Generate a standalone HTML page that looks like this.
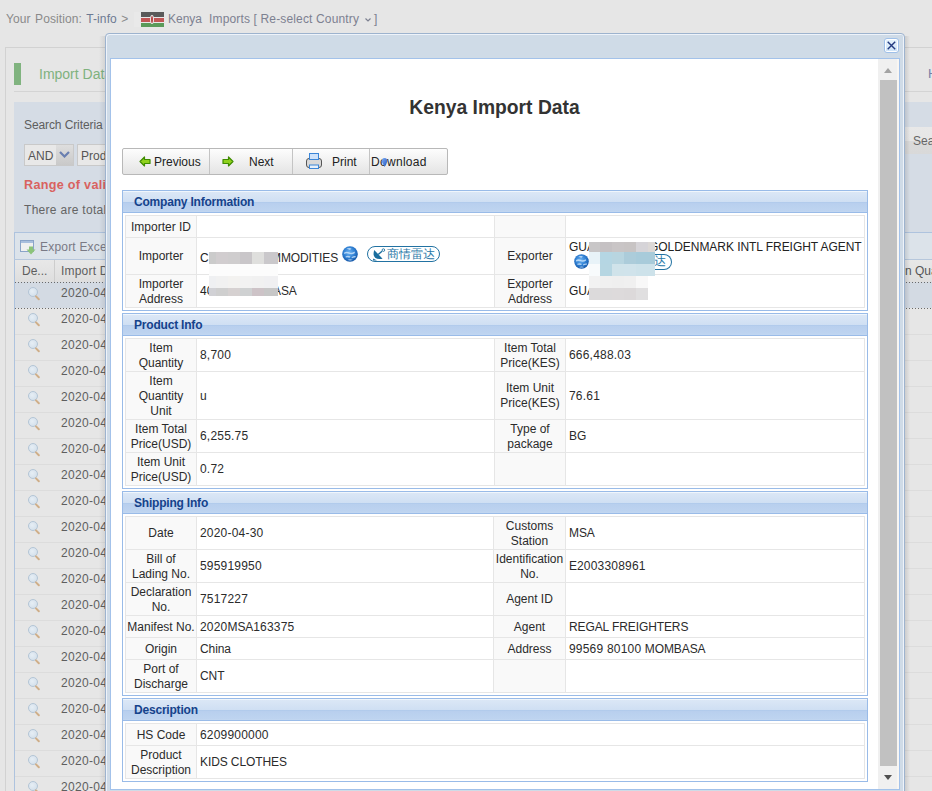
<!DOCTYPE html>
<html><head><meta charset="utf-8"><style>
html,body{margin:0;padding:0}
body{width:932px;height:791px;overflow:hidden;position:relative;background:#e6e6e6;font-family:"Liberation Sans", sans-serif}
</style></head><body>
<div style="position:absolute;left:6px;top:12px;white-space:nowrap;font-size:12px;color:#8a8a8a;letter-spacing:0.1px;word-spacing:1px">Your Position: <span style="color:#6d7a93">T-info</span> &gt;</div>
<div style="position:absolute;left:134px;top:12px;width:7px;height:15px;background:#e9e9e9"></div>
<div style="position:absolute;left:141px;top:12px;width:23px;height:15px;background:linear-gradient(#5a5a5a 0,#5a5a5a 5px,#e8e8e8 5px,#e8e8e8 6px,#c25656 6px,#c25656 10px,#e8e8e8 10px,#e8e8e8 11px,#5a9a5a 11px)"></div>
<div style="position:absolute;left:150px;top:15px;width:4px;height:9px;border-radius:50%;background:#b84848;border:1px solid #e8e8e8;box-sizing:border-box"></div>
<div style="position:absolute;left:168px;top:12px;white-space:nowrap;font-size:12px;color:#7d8191">Kenya</div>
<div style="position:absolute;left:209px;top:12px;white-space:nowrap;font-size:12px;color:#7d8191;letter-spacing:0.15px">Imports [ Re-select Country</div>
<svg style="position:absolute;left:365px;top:18px" width="6" height="4" viewBox="0 0 6 4"><path d="M0.5 0.5 L3 3 L5.5 0.5" fill="none" stroke="#7d8191" stroke-width="1.2"/></svg>
<div style="position:absolute;left:374px;top:12px;white-space:nowrap;font-size:12px;color:#7d8191">]</div>
<div style="position:absolute;left:5px;top:47px;width:1000px;height:1000px;border:1px solid #d2d2d2;box-sizing:border-box"></div>
<div style="position:absolute;left:14px;top:63px;width:7px;height:22px;background:#80b37f"></div>
<div style="position:absolute;left:39px;top:66px;white-space:nowrap;font-size:14px;color:#7fb27e">Import Data</div>
<div style="position:absolute;left:14px;top:91px;width:1000px;height:1px;background:#d4d4d4"></div>
<div style="position:absolute;left:928px;top:66px;white-space:nowrap;font-size:13px;color:#7480a8">H</div>
<div style="position:absolute;left:14px;top:102px;width:1000px;height:130px;background:#d5dce5"></div>
<div style="position:absolute;left:24px;top:118px;white-space:nowrap;font-size:12px;color:#5e5e5e;letter-spacing:-0.1px">Search Criteria</div>
<div style="position:absolute;left:24px;top:144px;width:50px;height:22px;background:#e8e8e8;border:1px solid #c9c9c9;box-sizing:border-box"></div>
<div style="position:absolute;left:28px;top:149px;white-space:nowrap;font-size:12px;color:#555">AND</div>
<div style="position:absolute;left:56px;top:145px;width:17px;height:20px;background:linear-gradient(#dedede,#c9c9c9)"></div>
<svg style="position:absolute;left:59px;top:151px" width="11" height="7" viewBox="0 0 11 7"><path d="M1 1 L5.5 5.5 L10 1" fill="none" stroke="#6a7fb0" stroke-width="2.2"/></svg>
<div style="position:absolute;left:77px;top:144px;width:100px;height:22px;background:#e8e8e8;border:1px solid #c9c9c9;box-sizing:border-box"></div>
<div style="position:absolute;left:81px;top:149px;white-space:nowrap;font-size:12px;color:#555">Product</div>
<div style="position:absolute;left:24px;top:178px;white-space:nowrap;font-size:12.6px;font-weight:bold;color:#d9625f;letter-spacing:0.3px">Range of valid</div>
<div style="position:absolute;left:24px;top:203px;white-space:nowrap;font-size:12px;color:#646464;letter-spacing:0.3px">There are total</div>
<div style="position:absolute;left:905px;top:127px;width:40px;height:27px;background:linear-gradient(#e8e8e8 0,#e6e6e6 50%,#dadada 50%,#d9d9d9 100%)"></div>
<div style="position:absolute;left:913px;top:134px;white-space:nowrap;font-size:12px;color:#666">Search</div>
<div style="position:absolute;left:14px;top:232px;width:1000px;height:1px;background:#aec3de"></div>
<div style="position:absolute;left:14px;top:232px;width:1px;height:600px;background:#aec3de"></div>
<div style="position:absolute;left:15px;top:233px;width:1000px;height:26px;background:#dce3ea"></div>
<div style="position:absolute;left:14px;top:259px;width:1000px;height:1px;background:#b6c7dc"></div>
<div style="position:absolute;left:20px;top:240px;width:14px;height:12px;border:1px solid #8aa4c8;box-sizing:border-box;background:linear-gradient(#a9bfdd 0,#a9bfdd 2px,#f0f0f0 2px)"></div>
<svg style="position:absolute;left:26px;top:246px" width="10" height="9" viewBox="0 0 10 9"><path d="M3 0.5 L7 0.5 L7 3.5 L9.5 3.5 L5 8.5 L0.5 3.5 L3 3.5 Z" fill="#8cc47a"/></svg>
<div style="position:absolute;left:40px;top:240px;white-space:nowrap;font-size:12px;color:#7a7a85;letter-spacing:0.2px">Export Excel</div>
<div style="position:absolute;left:15px;top:260px;width:1000px;height:22px;background:linear-gradient(#e8e8e8,#dedede)"></div>
<div style="position:absolute;left:54px;top:260px;width:1px;height:22px;background:#cdcdcd"></div>
<div style="position:absolute;left:22px;top:264px;white-space:nowrap;font-size:12px;color:#5e5e5e">De...</div>
<div style="position:absolute;left:61px;top:264px;white-space:nowrap;font-size:12px;color:#5e5e5e;letter-spacing:0.2px">Import Date</div>
<div style="position:absolute;left:905px;top:264px;white-space:nowrap;font-size:12px;color:#555">n Quantity</div>
<div style="position:absolute;left:15px;top:282px;width:1000px;height:26px;background:#d3dae3"></div>
<div style="position:absolute;left:15px;top:282px;width:1000px;height:1px;background-image:linear-gradient(90deg,#6a6a6a 50%,transparent 50%);background-size:3px 1px"></div>
<div style="position:absolute;left:15px;top:308px;width:1000px;height:1px;background-image:linear-gradient(90deg,#6a6a6a 50%,transparent 50%);background-size:3px 1px"></div>
<div style="position:absolute;left:28px;top:287px;width:10px;height:10px;border-radius:50%;border:1px solid #b3c5d6;background:radial-gradient(circle at 40% 40%,#e6eef5,#cfdce8);box-sizing:border-box"></div>
<div style="position:absolute;left:36px;top:295px;width:6px;height:2px;background:#cfae88;transform:rotate(45deg);transform-origin:0 0;border-radius:1px"></div>
<div style="position:absolute;left:61px;top:286px;white-space:nowrap;font-size:12px;color:#5e5e5e;letter-spacing:0.3px">2020-04-30</div>
<div style="position:absolute;left:15px;top:334px;width:1000px;height:1px;background:#dcdcdc"></div>
<div style="position:absolute;left:28px;top:313px;width:10px;height:10px;border-radius:50%;border:1px solid #b3c5d6;background:radial-gradient(circle at 40% 40%,#e6eef5,#cfdce8);box-sizing:border-box"></div>
<div style="position:absolute;left:36px;top:321px;width:6px;height:2px;background:#cfae88;transform:rotate(45deg);transform-origin:0 0;border-radius:1px"></div>
<div style="position:absolute;left:61px;top:312px;white-space:nowrap;font-size:12px;color:#5e5e5e;letter-spacing:0.3px">2020-04-30</div>
<div style="position:absolute;left:15px;top:360px;width:1000px;height:1px;background:#dcdcdc"></div>
<div style="position:absolute;left:28px;top:339px;width:10px;height:10px;border-radius:50%;border:1px solid #b3c5d6;background:radial-gradient(circle at 40% 40%,#e6eef5,#cfdce8);box-sizing:border-box"></div>
<div style="position:absolute;left:36px;top:347px;width:6px;height:2px;background:#cfae88;transform:rotate(45deg);transform-origin:0 0;border-radius:1px"></div>
<div style="position:absolute;left:61px;top:338px;white-space:nowrap;font-size:12px;color:#5e5e5e;letter-spacing:0.3px">2020-04-30</div>
<div style="position:absolute;left:15px;top:386px;width:1000px;height:1px;background:#dcdcdc"></div>
<div style="position:absolute;left:28px;top:365px;width:10px;height:10px;border-radius:50%;border:1px solid #b3c5d6;background:radial-gradient(circle at 40% 40%,#e6eef5,#cfdce8);box-sizing:border-box"></div>
<div style="position:absolute;left:36px;top:373px;width:6px;height:2px;background:#cfae88;transform:rotate(45deg);transform-origin:0 0;border-radius:1px"></div>
<div style="position:absolute;left:61px;top:364px;white-space:nowrap;font-size:12px;color:#5e5e5e;letter-spacing:0.3px">2020-04-30</div>
<div style="position:absolute;left:15px;top:412px;width:1000px;height:1px;background:#dcdcdc"></div>
<div style="position:absolute;left:28px;top:391px;width:10px;height:10px;border-radius:50%;border:1px solid #b3c5d6;background:radial-gradient(circle at 40% 40%,#e6eef5,#cfdce8);box-sizing:border-box"></div>
<div style="position:absolute;left:36px;top:399px;width:6px;height:2px;background:#cfae88;transform:rotate(45deg);transform-origin:0 0;border-radius:1px"></div>
<div style="position:absolute;left:61px;top:390px;white-space:nowrap;font-size:12px;color:#5e5e5e;letter-spacing:0.3px">2020-04-30</div>
<div style="position:absolute;left:15px;top:438px;width:1000px;height:1px;background:#dcdcdc"></div>
<div style="position:absolute;left:28px;top:417px;width:10px;height:10px;border-radius:50%;border:1px solid #b3c5d6;background:radial-gradient(circle at 40% 40%,#e6eef5,#cfdce8);box-sizing:border-box"></div>
<div style="position:absolute;left:36px;top:425px;width:6px;height:2px;background:#cfae88;transform:rotate(45deg);transform-origin:0 0;border-radius:1px"></div>
<div style="position:absolute;left:61px;top:416px;white-space:nowrap;font-size:12px;color:#5e5e5e;letter-spacing:0.3px">2020-04-30</div>
<div style="position:absolute;left:15px;top:464px;width:1000px;height:1px;background:#dcdcdc"></div>
<div style="position:absolute;left:28px;top:443px;width:10px;height:10px;border-radius:50%;border:1px solid #b3c5d6;background:radial-gradient(circle at 40% 40%,#e6eef5,#cfdce8);box-sizing:border-box"></div>
<div style="position:absolute;left:36px;top:451px;width:6px;height:2px;background:#cfae88;transform:rotate(45deg);transform-origin:0 0;border-radius:1px"></div>
<div style="position:absolute;left:61px;top:442px;white-space:nowrap;font-size:12px;color:#5e5e5e;letter-spacing:0.3px">2020-04-30</div>
<div style="position:absolute;left:15px;top:490px;width:1000px;height:1px;background:#dcdcdc"></div>
<div style="position:absolute;left:28px;top:469px;width:10px;height:10px;border-radius:50%;border:1px solid #b3c5d6;background:radial-gradient(circle at 40% 40%,#e6eef5,#cfdce8);box-sizing:border-box"></div>
<div style="position:absolute;left:36px;top:477px;width:6px;height:2px;background:#cfae88;transform:rotate(45deg);transform-origin:0 0;border-radius:1px"></div>
<div style="position:absolute;left:61px;top:468px;white-space:nowrap;font-size:12px;color:#5e5e5e;letter-spacing:0.3px">2020-04-30</div>
<div style="position:absolute;left:15px;top:516px;width:1000px;height:1px;background:#dcdcdc"></div>
<div style="position:absolute;left:28px;top:495px;width:10px;height:10px;border-radius:50%;border:1px solid #b3c5d6;background:radial-gradient(circle at 40% 40%,#e6eef5,#cfdce8);box-sizing:border-box"></div>
<div style="position:absolute;left:36px;top:503px;width:6px;height:2px;background:#cfae88;transform:rotate(45deg);transform-origin:0 0;border-radius:1px"></div>
<div style="position:absolute;left:61px;top:494px;white-space:nowrap;font-size:12px;color:#5e5e5e;letter-spacing:0.3px">2020-04-30</div>
<div style="position:absolute;left:15px;top:542px;width:1000px;height:1px;background:#dcdcdc"></div>
<div style="position:absolute;left:28px;top:521px;width:10px;height:10px;border-radius:50%;border:1px solid #b3c5d6;background:radial-gradient(circle at 40% 40%,#e6eef5,#cfdce8);box-sizing:border-box"></div>
<div style="position:absolute;left:36px;top:529px;width:6px;height:2px;background:#cfae88;transform:rotate(45deg);transform-origin:0 0;border-radius:1px"></div>
<div style="position:absolute;left:61px;top:520px;white-space:nowrap;font-size:12px;color:#5e5e5e;letter-spacing:0.3px">2020-04-30</div>
<div style="position:absolute;left:15px;top:568px;width:1000px;height:1px;background:#dcdcdc"></div>
<div style="position:absolute;left:28px;top:547px;width:10px;height:10px;border-radius:50%;border:1px solid #b3c5d6;background:radial-gradient(circle at 40% 40%,#e6eef5,#cfdce8);box-sizing:border-box"></div>
<div style="position:absolute;left:36px;top:555px;width:6px;height:2px;background:#cfae88;transform:rotate(45deg);transform-origin:0 0;border-radius:1px"></div>
<div style="position:absolute;left:61px;top:546px;white-space:nowrap;font-size:12px;color:#5e5e5e;letter-spacing:0.3px">2020-04-30</div>
<div style="position:absolute;left:15px;top:594px;width:1000px;height:1px;background:#dcdcdc"></div>
<div style="position:absolute;left:28px;top:573px;width:10px;height:10px;border-radius:50%;border:1px solid #b3c5d6;background:radial-gradient(circle at 40% 40%,#e6eef5,#cfdce8);box-sizing:border-box"></div>
<div style="position:absolute;left:36px;top:581px;width:6px;height:2px;background:#cfae88;transform:rotate(45deg);transform-origin:0 0;border-radius:1px"></div>
<div style="position:absolute;left:61px;top:572px;white-space:nowrap;font-size:12px;color:#5e5e5e;letter-spacing:0.3px">2020-04-30</div>
<div style="position:absolute;left:15px;top:620px;width:1000px;height:1px;background:#dcdcdc"></div>
<div style="position:absolute;left:28px;top:599px;width:10px;height:10px;border-radius:50%;border:1px solid #b3c5d6;background:radial-gradient(circle at 40% 40%,#e6eef5,#cfdce8);box-sizing:border-box"></div>
<div style="position:absolute;left:36px;top:607px;width:6px;height:2px;background:#cfae88;transform:rotate(45deg);transform-origin:0 0;border-radius:1px"></div>
<div style="position:absolute;left:61px;top:598px;white-space:nowrap;font-size:12px;color:#5e5e5e;letter-spacing:0.3px">2020-04-30</div>
<div style="position:absolute;left:15px;top:646px;width:1000px;height:1px;background:#dcdcdc"></div>
<div style="position:absolute;left:28px;top:625px;width:10px;height:10px;border-radius:50%;border:1px solid #b3c5d6;background:radial-gradient(circle at 40% 40%,#e6eef5,#cfdce8);box-sizing:border-box"></div>
<div style="position:absolute;left:36px;top:633px;width:6px;height:2px;background:#cfae88;transform:rotate(45deg);transform-origin:0 0;border-radius:1px"></div>
<div style="position:absolute;left:61px;top:624px;white-space:nowrap;font-size:12px;color:#5e5e5e;letter-spacing:0.3px">2020-04-30</div>
<div style="position:absolute;left:15px;top:672px;width:1000px;height:1px;background:#dcdcdc"></div>
<div style="position:absolute;left:28px;top:651px;width:10px;height:10px;border-radius:50%;border:1px solid #b3c5d6;background:radial-gradient(circle at 40% 40%,#e6eef5,#cfdce8);box-sizing:border-box"></div>
<div style="position:absolute;left:36px;top:659px;width:6px;height:2px;background:#cfae88;transform:rotate(45deg);transform-origin:0 0;border-radius:1px"></div>
<div style="position:absolute;left:61px;top:650px;white-space:nowrap;font-size:12px;color:#5e5e5e;letter-spacing:0.3px">2020-04-30</div>
<div style="position:absolute;left:15px;top:698px;width:1000px;height:1px;background:#dcdcdc"></div>
<div style="position:absolute;left:28px;top:677px;width:10px;height:10px;border-radius:50%;border:1px solid #b3c5d6;background:radial-gradient(circle at 40% 40%,#e6eef5,#cfdce8);box-sizing:border-box"></div>
<div style="position:absolute;left:36px;top:685px;width:6px;height:2px;background:#cfae88;transform:rotate(45deg);transform-origin:0 0;border-radius:1px"></div>
<div style="position:absolute;left:61px;top:676px;white-space:nowrap;font-size:12px;color:#5e5e5e;letter-spacing:0.3px">2020-04-30</div>
<div style="position:absolute;left:15px;top:724px;width:1000px;height:1px;background:#dcdcdc"></div>
<div style="position:absolute;left:28px;top:703px;width:10px;height:10px;border-radius:50%;border:1px solid #b3c5d6;background:radial-gradient(circle at 40% 40%,#e6eef5,#cfdce8);box-sizing:border-box"></div>
<div style="position:absolute;left:36px;top:711px;width:6px;height:2px;background:#cfae88;transform:rotate(45deg);transform-origin:0 0;border-radius:1px"></div>
<div style="position:absolute;left:61px;top:702px;white-space:nowrap;font-size:12px;color:#5e5e5e;letter-spacing:0.3px">2020-04-30</div>
<div style="position:absolute;left:15px;top:750px;width:1000px;height:1px;background:#dcdcdc"></div>
<div style="position:absolute;left:28px;top:729px;width:10px;height:10px;border-radius:50%;border:1px solid #b3c5d6;background:radial-gradient(circle at 40% 40%,#e6eef5,#cfdce8);box-sizing:border-box"></div>
<div style="position:absolute;left:36px;top:737px;width:6px;height:2px;background:#cfae88;transform:rotate(45deg);transform-origin:0 0;border-radius:1px"></div>
<div style="position:absolute;left:61px;top:728px;white-space:nowrap;font-size:12px;color:#5e5e5e;letter-spacing:0.3px">2020-04-30</div>
<div style="position:absolute;left:15px;top:776px;width:1000px;height:1px;background:#dcdcdc"></div>
<div style="position:absolute;left:28px;top:755px;width:10px;height:10px;border-radius:50%;border:1px solid #b3c5d6;background:radial-gradient(circle at 40% 40%,#e6eef5,#cfdce8);box-sizing:border-box"></div>
<div style="position:absolute;left:36px;top:763px;width:6px;height:2px;background:#cfae88;transform:rotate(45deg);transform-origin:0 0;border-radius:1px"></div>
<div style="position:absolute;left:61px;top:754px;white-space:nowrap;font-size:12px;color:#5e5e5e;letter-spacing:0.3px">2020-04-30</div>
<div style="position:absolute;left:15px;top:802px;width:1000px;height:1px;background:#dcdcdc"></div>
<div style="position:absolute;left:28px;top:781px;width:10px;height:10px;border-radius:50%;border:1px solid #b3c5d6;background:radial-gradient(circle at 40% 40%,#e6eef5,#cfdce8);box-sizing:border-box"></div>
<div style="position:absolute;left:36px;top:789px;width:6px;height:2px;background:#cfae88;transform:rotate(45deg);transform-origin:0 0;border-radius:1px"></div>
<div style="position:absolute;left:61px;top:780px;white-space:nowrap;font-size:12px;color:#5e5e5e;letter-spacing:0.3px">2020-04-30</div>
<div style="position:absolute;left:99px;top:36px;width:6px;height:800px;background:linear-gradient(90deg,rgba(0,0,0,0),rgba(0,0,0,0.08))"></div>
<div style="position:absolute;left:905px;top:36px;width:5px;height:800px;background:linear-gradient(90deg,rgba(0,0,0,0.11),rgba(0,0,0,0))"></div>
<div style="position:absolute;left:105px;top:33px;width:800px;height:800px;background:#cfdbe7;border:1px solid #9db3ce;border-radius:4px 4px 0 0;box-sizing:border-box;box-shadow:inset 1px 1px 0 #eef3fa, inset -1px 0 0 #eef3fa"></div>
<div style="position:absolute;left:884px;top:38px;width:15px;height:15px;box-sizing:border-box;border:1px solid #9fc0e9;border-radius:3px;background:linear-gradient(#ffffff,#ffffff)"></div>
<div style="position:absolute;left:886px;top:40px;width:11px;height:11px;background:linear-gradient(#e6f3fd,#cfe4f8)"></div>
<svg style="position:absolute;left:884px;top:38px" width="15" height="15" viewBox="0 0 15 15"><path d="M3.7 3.7 L11.2 11.2 M11.2 3.7 L3.7 11.2" stroke="#233a80" stroke-width="1.4"/></svg>
<div style="position:absolute;left:110px;top:58px;width:790px;height:732px;background:#fff;border:1px solid #a3c2ea;box-sizing:border-box"></div>
<div style="position:absolute;left:878px;top:59px;width:21px;height:730px;background:#f0f0f0"></div>
<div style="position:absolute;left:897px;top:59px;width:2px;height:730px;background:#f9f6f2"></div>
<div style="position:absolute;left:880px;top:80px;width:17px;height:686px;background:#c1c1c1"></div>
<div style="position:absolute;left:884px;top:68px;width:0;height:0;border-left:4.5px solid transparent;border-right:4.5px solid transparent;border-bottom:5px solid #a3a3a3"></div>
<div style="position:absolute;left:884px;top:775px;width:0;height:0;border-left:4.5px solid transparent;border-right:4.5px solid transparent;border-top:5px solid #505050"></div>
<div style="position:absolute;left:111px;top:97px;width:767px;text-align:center;font-weight:bold;font-size:19.3px;color:#333;white-space:nowrap">Kenya Import Data</div>
<div style="position:absolute;left:122px;top:148px;width:326px;height:27px;box-sizing:border-box;border:1px solid #b8b8b8;border-radius:2px;background:linear-gradient(#fdfdfd,#e4e4e4)"></div>
<div style="position:absolute;left:209px;top:149px;width:1px;height:25px;background:#c4c4c4"></div>
<div style="position:absolute;left:292px;top:149px;width:1px;height:25px;background:#c4c4c4"></div>
<div style="position:absolute;left:369px;top:149px;width:1px;height:25px;background:#c4c4c4"></div>
<svg style="position:absolute;left:139px;top:156px" width="12" height="11" viewBox="0 0 12 11"><path d="M1 5.5 L5.5 1 L5.5 3.5 L11 3.5 L11 7.5 L5.5 7.5 L5.5 10 Z" fill="#8fd11c" stroke="#3f8c00" stroke-width="1.2" stroke-linejoin="round"/></svg>
<svg style="position:absolute;left:222px;top:156px" width="12" height="11" viewBox="0 0 12 11"><path d="M11 5.5 L6.5 1 L6.5 3.5 L1 3.5 L1 7.5 L6.5 7.5 L6.5 10 Z" fill="#8fd11c" stroke="#3f8c00" stroke-width="1.2" stroke-linejoin="round"/></svg>
<svg style="position:absolute;left:305px;top:152px" width="18" height="18" viewBox="0 0 18 18"><rect x="1.5" y="6.5" width="15" height="9" rx="2.5" fill="#d9d9d9" stroke="#555" stroke-width="1"/><rect x="4.5" y="1.5" width="9" height="6" fill="#cfe3fb" stroke="#3b86d8" stroke-width="1"/><rect x="4.5" y="13" width="9" height="3.5" fill="#e6f0fb" stroke="#3b86d8" stroke-width="1"/></svg>
<div style="position:absolute;top:155px;font-size:12px;color:#222;white-space:nowrap;left:154px">Previous</div>
<div style="position:absolute;top:155px;font-size:12px;color:#222;white-space:nowrap;left:249px">Next</div>
<div style="position:absolute;top:155px;font-size:12px;color:#222;white-space:nowrap;left:332px">Print</div>
<div style="position:absolute;top:155px;font-size:12px;color:#222;white-space:nowrap;left:371px;letter-spacing:0.3px">Download</div>
<svg style="position:absolute;left:381px;top:157px" width="7" height="11" viewBox="0 0 7 11"><defs><linearGradient id="dlg" x1="0" y1="0" x2="1" y2="1"><stop offset="0" stop-color="#7fb0f5"/><stop offset="1" stop-color="#1f4fc0"/></linearGradient></defs><path d="M3.5 1 C5.8 1 6.3 2.8 6.3 4.6 L3.5 10 L0.7 4.6 C0.7 2.8 1.2 1 3.5 1 Z" fill="url(#dlg)"/></svg>
<div style="position:absolute;left:122px;top:190px;width:746px;height:121px;border:1px solid #99bbe8;box-sizing:border-box;background:#fff"></div>
<div style="position:absolute;left:123px;top:191px;width:744px;height:21px;background:linear-gradient(#f0f6fc 0,#f0f6fc 1px,#dbe7f6 1px,#cfdff3 11px,#abc7ea 11px,#b8cfee 12px,#bed4f0 20px,#c4d8f1 21px)"></div>
<div style="position:absolute;left:123px;top:212px;width:744px;height:1px;background:#99bbe8"></div>
<div style="position:absolute;left:134px;top:195px;white-space:nowrap;font-weight:bold;font-size:12px;color:#15428b;line-height:14px;letter-spacing:-0.2px">Company Information</div>
<div style="position:absolute;left:125px;top:215px;width:740px;height:93px;background:#fff"></div>
<div style="position:absolute;left:126px;top:216px;width:70px;height:91px;background:#f9f9f9"></div>
<div style="position:absolute;left:495px;top:216px;width:70px;height:91px;background:#f9f9f9"></div>
<div style="position:absolute;left:125px;top:215px;width:740px;height:1px;background:#e6e6e6"></div>
<div style="position:absolute;left:126px;top:216px;width:70px;height:21px;display:flex;align-items:center;justify-content:center;text-align:center;padding-top:1px;box-sizing:border-box;font-size:12px;line-height:15px;color:#2b2b2b">Importer ID</div>
<div style="position:absolute;left:197px;top:216px;width:297px;height:21px;display:flex;align-items:center;padding-left:3px;padding-top:1px;box-sizing:border-box;font-size:12px;line-height:15px;color:#2b2b2b;white-space:nowrap;letter-spacing:0.2px"><span></span></div>
<div style="position:absolute;left:495px;top:216px;width:70px;height:21px;display:flex;align-items:center;justify-content:center;text-align:center;padding-top:1px;box-sizing:border-box;font-size:12px;line-height:15px;color:#2b2b2b"></div>
<div style="position:absolute;left:566px;top:216px;width:298px;height:21px;display:flex;align-items:center;padding-left:3px;padding-top:1px;box-sizing:border-box;font-size:12px;line-height:15px;color:#2b2b2b;white-space:nowrap;letter-spacing:0.2px"><span></span></div>
<div style="position:absolute;left:125px;top:237px;width:740px;height:1px;background:#e6e6e6"></div>
<div style="position:absolute;left:126px;top:238px;width:70px;height:36px;display:flex;align-items:center;justify-content:center;text-align:center;padding-top:1px;box-sizing:border-box;font-size:12px;line-height:15px;color:#2b2b2b">Importer</div>
<div style="position:absolute;left:495px;top:238px;width:70px;height:36px;display:flex;align-items:center;justify-content:center;text-align:center;padding-top:1px;box-sizing:border-box;font-size:12px;line-height:15px;color:#2b2b2b">Exporter</div>
<div style="position:absolute;left:125px;top:274px;width:740px;height:1px;background:#e6e6e6"></div>
<div style="position:absolute;left:126px;top:275px;width:70px;height:32px;display:flex;align-items:center;justify-content:center;text-align:center;padding-top:1px;box-sizing:border-box;font-size:12px;line-height:15px;color:#2b2b2b">Importer<br>Address</div>
<div style="position:absolute;left:495px;top:275px;width:70px;height:32px;display:flex;align-items:center;justify-content:center;text-align:center;padding-top:1px;box-sizing:border-box;font-size:12px;line-height:15px;color:#2b2b2b">Exporter<br>Address</div>
<div style="position:absolute;left:125px;top:307px;width:740px;height:1px;background:#e6e6e6"></div>
<div style="position:absolute;left:125px;top:215px;width:1px;height:93px;background:#e6e6e6"></div>
<div style="position:absolute;left:196px;top:215px;width:1px;height:93px;background:#e6e6e6"></div>
<div style="position:absolute;left:494px;top:215px;width:1px;height:93px;background:#e6e6e6"></div>
<div style="position:absolute;left:565px;top:215px;width:1px;height:93px;background:#e6e6e6"></div>
<div style="position:absolute;left:864px;top:215px;width:1px;height:93px;background:#e6e6e6"></div>
<div style="position:absolute;left:200px;top:251px;white-space:nowrap;font-size:12px;line-height:15px;color:#222">C</div>
<div style="position:absolute;left:271px;top:251px;white-space:nowrap;font-size:12px;line-height:15px;color:#2b2b2b;letter-spacing:-0.1px">MMODITIES</div>
<svg style="position:absolute;left:342px;top:246px" width="16" height="16" viewBox="0 0 16 16"><defs><radialGradient id="gg342" cx="45%" cy="40%" r="60%"><stop offset="0" stop-color="#6fb4f2"/><stop offset="0.6" stop-color="#2f7fd2"/><stop offset="1" stop-color="#1658a8"/></radialGradient></defs><circle cx="8" cy="8" r="7.8" fill="url(#gg342)"/><path d="M4.5 2.6 Q7 1.6 9.5 2.4 L8 4 Q6 3.4 4.5 2.6 Z M2.2 6.5 Q4.5 5 7 6.2 Q9.5 7.6 12.5 5.6 L13 7 Q10 9 7 7.8 Q4.5 6.8 2 8 Z M3.5 10.5 Q6 9.2 8.5 10.6 L7.5 11.8 Q5.5 11 3.8 11.6 Z M9.5 11.2 Q12 9.6 14 10.2 L13.2 11.6 Q11.5 11.4 10 12.2 Z M5.5 13.8 Q8 12.8 10.8 13.8 Q8 15 5.5 13.8 Z" fill="#d9ecfd" opacity="0.75"/></svg>
<div style="position:absolute;left:367px;top:246px;width:73px;height:16px;box-sizing:border-box;border:1.8px solid #2272a2;border-radius:8px"></div>
<svg style="position:absolute;left:372px;top:248px" width="14" height="13" viewBox="0 0 14 13"><path d="M2.2 2 Q-0.8 12.5 10.6 10.8 Z" fill="#1a6e9e"/><path d="M1.2 10.5 L5 12.4 L1 12.4 Z" fill="#1a6e9e"/><path d="M6.2 6.6 L10 3.2" stroke="#1a6e9e" stroke-width="1.3"/><circle cx="11.4" cy="2.1" r="1.3" fill="none" stroke="#1a6e9e" stroke-width="0.9"/></svg>
<div style="position:absolute;left:387px;top:247px;white-space:nowrap;font-size:11.5px;line-height:14px;color:#2a78a8">商情雷达</div>
<div style="position:absolute;left:200px;top:284px;white-space:nowrap;font-size:12px;line-height:15px;color:#222">40</div>
<div style="position:absolute;left:273px;top:284px;white-space:nowrap;font-size:12px;line-height:15px;color:#2b2b2b;letter-spacing:-0.1px">ASA</div>
<div style="position:absolute;left:569px;top:240px;white-space:nowrap;font-size:12px;line-height:15px;color:#222">GUAN</div>
<div style="position:absolute;left:649px;top:240px;white-space:nowrap;font-size:12px;line-height:15px;color:#222;letter-spacing:-0.05px">GOLDENMARK INTL FREIGHT AGENT</div>
<svg style="position:absolute;left:574px;top:254px" width="15" height="15" viewBox="0 0 16 16"><defs><radialGradient id="gg574" cx="45%" cy="40%" r="60%"><stop offset="0" stop-color="#6fb4f2"/><stop offset="0.6" stop-color="#2f7fd2"/><stop offset="1" stop-color="#1658a8"/></radialGradient></defs><circle cx="8" cy="8" r="7.8" fill="url(#gg574)"/><path d="M4.5 2.6 Q7 1.6 9.5 2.4 L8 4 Q6 3.4 4.5 2.6 Z M2.2 6.5 Q4.5 5 7 6.2 Q9.5 7.6 12.5 5.6 L13 7 Q10 9 7 7.8 Q4.5 6.8 2 8 Z M3.5 10.5 Q6 9.2 8.5 10.6 L7.5 11.8 Q5.5 11 3.8 11.6 Z M9.5 11.2 Q12 9.6 14 10.2 L13.2 11.6 Q11.5 11.4 10 12.2 Z M5.5 13.8 Q8 12.8 10.8 13.8 Q8 15 5.5 13.8 Z" fill="#d9ecfd" opacity="0.75"/></svg>
<div style="position:absolute;left:640px;top:254px;width:32px;height:16px;box-sizing:border-box;border:1.8px solid #2272a2;border-left:none;border-radius:0 8px 8px 0"></div>
<div style="position:absolute;left:654px;top:254px;white-space:nowrap;font-size:11.5px;line-height:14px;color:#2a78a8">达</div>
<div style="position:absolute;left:569px;top:284px;white-space:nowrap;font-size:12px;line-height:15px;color:#222">GUAN</div>
<div style="position:absolute;left:209px;top:252px;width:7px;height:12px;background:#cbcbcb"></div>
<div style="position:absolute;left:216px;top:252px;width:12px;height:12px;background:#d1cdcf"></div>
<div style="position:absolute;left:228px;top:252px;width:12px;height:12px;background:#cfcdce"></div>
<div style="position:absolute;left:240px;top:252px;width:12px;height:12px;background:#c9c6c9"></div>
<div style="position:absolute;left:252px;top:252px;width:12px;height:12px;background:#dfdfdd"></div>
<div style="position:absolute;left:264px;top:252px;width:14px;height:12px;background:#cac8cb"></div>
<div style="position:absolute;left:209px;top:264px;width:7px;height:12px;background:#fcfcfc"></div>
<div style="position:absolute;left:216px;top:264px;width:12px;height:12px;background:#fcfcfc"></div>
<div style="position:absolute;left:228px;top:264px;width:12px;height:12px;background:#fcfcfc"></div>
<div style="position:absolute;left:240px;top:264px;width:12px;height:12px;background:#fcfcfc"></div>
<div style="position:absolute;left:252px;top:264px;width:12px;height:12px;background:#fcfcfc"></div>
<div style="position:absolute;left:264px;top:264px;width:14px;height:12px;background:#fcfcfc"></div>
<div style="position:absolute;left:209px;top:276px;width:7px;height:12px;background:#eff0f2"></div>
<div style="position:absolute;left:216px;top:276px;width:12px;height:12px;background:#f1f1f1"></div>
<div style="position:absolute;left:228px;top:276px;width:12px;height:12px;background:#f3f2f0"></div>
<div style="position:absolute;left:240px;top:276px;width:12px;height:12px;background:#f2f2f2"></div>
<div style="position:absolute;left:252px;top:276px;width:12px;height:12px;background:#f1f1f1"></div>
<div style="position:absolute;left:264px;top:276px;width:14px;height:12px;background:#f0f0f2"></div>
<div style="position:absolute;left:209px;top:288px;width:7px;height:8px;background:#d1d1d5"></div>
<div style="position:absolute;left:216px;top:288px;width:12px;height:8px;background:#cfcfcf"></div>
<div style="position:absolute;left:228px;top:288px;width:12px;height:8px;background:#d6d1d1"></div>
<div style="position:absolute;left:240px;top:288px;width:12px;height:8px;background:#cfd1d2"></div>
<div style="position:absolute;left:252px;top:288px;width:12px;height:8px;background:#cdc3c7"></div>
<div style="position:absolute;left:264px;top:288px;width:14px;height:8px;background:#c7c7c7"></div>
<div style="position:absolute;left:589px;top:242px;width:11px;height:10px;background:#c8c6c7"></div>
<div style="position:absolute;left:600px;top:242px;width:12px;height:10px;background:#c5c1c3"></div>
<div style="position:absolute;left:612px;top:242px;width:12px;height:10px;background:#c9c5c6"></div>
<div style="position:absolute;left:624px;top:242px;width:12px;height:10px;background:#c8c4c4"></div>
<div style="position:absolute;left:636px;top:242px;width:12px;height:10px;background:#d6d4d8"></div>
<div style="position:absolute;left:648px;top:242px;width:7px;height:10px;background:#dcd8d6"></div>
<div style="position:absolute;left:589px;top:252px;width:11px;height:12px;background:#e8f3f8"></div>
<div style="position:absolute;left:600px;top:252px;width:12px;height:12px;background:#b5d6e3"></div>
<div style="position:absolute;left:612px;top:252px;width:12px;height:12px;background:#b8d5e0"></div>
<div style="position:absolute;left:624px;top:252px;width:12px;height:12px;background:#acccda"></div>
<div style="position:absolute;left:636px;top:252px;width:12px;height:12px;background:#a8cbda"></div>
<div style="position:absolute;left:648px;top:252px;width:7px;height:12px;background:#a8cbda"></div>
<div style="position:absolute;left:589px;top:264px;width:11px;height:12px;background:#f8fbfc"></div>
<div style="position:absolute;left:600px;top:264px;width:12px;height:12px;background:#b6d6e2"></div>
<div style="position:absolute;left:612px;top:264px;width:12px;height:12px;background:#d0e3ea"></div>
<div style="position:absolute;left:624px;top:264px;width:12px;height:12px;background:#d0e3eb"></div>
<div style="position:absolute;left:636px;top:264px;width:12px;height:12px;background:#cde2ea"></div>
<div style="position:absolute;left:648px;top:264px;width:7px;height:12px;background:#cde2ea"></div>
<div style="position:absolute;left:589px;top:276px;width:11px;height:12px;background:#f2f2f2"></div>
<div style="position:absolute;left:600px;top:276px;width:12px;height:12px;background:#f0f0f0"></div>
<div style="position:absolute;left:612px;top:276px;width:12px;height:12px;background:#efefef"></div>
<div style="position:absolute;left:624px;top:276px;width:12px;height:12px;background:#f0f0f0"></div>
<div style="position:absolute;left:636px;top:276px;width:12px;height:12px;background:#f8f8f8"></div>
<div style="position:absolute;left:589px;top:288px;width:11px;height:12px;background:#dcdadb"></div>
<div style="position:absolute;left:600px;top:288px;width:12px;height:12px;background:#dcdadb"></div>
<div style="position:absolute;left:612px;top:288px;width:12px;height:12px;background:#dddadb"></div>
<div style="position:absolute;left:624px;top:288px;width:12px;height:12px;background:#dcd9da"></div>
<div style="position:absolute;left:636px;top:288px;width:12px;height:12px;background:#e0dfe0"></div>
<div style="position:absolute;left:122px;top:313px;width:746px;height:176px;border:1px solid #99bbe8;box-sizing:border-box;background:#fff"></div>
<div style="position:absolute;left:123px;top:314px;width:744px;height:21px;background:linear-gradient(#f0f6fc 0,#f0f6fc 1px,#dbe7f6 1px,#cfdff3 11px,#abc7ea 11px,#b8cfee 12px,#bed4f0 20px,#c4d8f1 21px)"></div>
<div style="position:absolute;left:123px;top:335px;width:744px;height:1px;background:#99bbe8"></div>
<div style="position:absolute;left:134px;top:318px;white-space:nowrap;font-weight:bold;font-size:12px;color:#15428b;line-height:14px;letter-spacing:-0.2px">Product Info</div>
<div style="position:absolute;left:125px;top:338px;width:740px;height:148px;background:#fff"></div>
<div style="position:absolute;left:126px;top:339px;width:70px;height:146px;background:#f9f9f9"></div>
<div style="position:absolute;left:495px;top:339px;width:70px;height:146px;background:#f9f9f9"></div>
<div style="position:absolute;left:125px;top:338px;width:740px;height:1px;background:#e6e6e6"></div>
<div style="position:absolute;left:126px;top:339px;width:70px;height:32px;display:flex;align-items:center;justify-content:center;text-align:center;padding-top:1px;box-sizing:border-box;font-size:12px;line-height:15px;color:#2b2b2b">Item<br>Quantity</div>
<div style="position:absolute;left:197px;top:339px;width:297px;height:32px;display:flex;align-items:center;padding-left:3px;padding-top:1px;box-sizing:border-box;font-size:12px;line-height:15px;color:#2b2b2b;white-space:nowrap;letter-spacing:0.2px"><span>8,700</span></div>
<div style="position:absolute;left:495px;top:339px;width:70px;height:32px;display:flex;align-items:center;justify-content:center;text-align:center;padding-top:1px;box-sizing:border-box;font-size:12px;line-height:15px;color:#2b2b2b">Item Total<br>Price(KES)</div>
<div style="position:absolute;left:566px;top:339px;width:298px;height:32px;display:flex;align-items:center;padding-left:3px;padding-top:1px;box-sizing:border-box;font-size:12px;line-height:15px;color:#2b2b2b;white-space:nowrap;letter-spacing:0.2px"><span>666,488.03</span></div>
<div style="position:absolute;left:125px;top:371px;width:740px;height:1px;background:#e6e6e6"></div>
<div style="position:absolute;left:126px;top:372px;width:70px;height:47px;display:flex;align-items:center;justify-content:center;text-align:center;padding-top:1px;box-sizing:border-box;font-size:12px;line-height:15px;color:#2b2b2b">Item<br>Quantity<br>Unit</div>
<div style="position:absolute;left:197px;top:372px;width:297px;height:47px;display:flex;align-items:center;padding-left:3px;padding-top:1px;box-sizing:border-box;font-size:12px;line-height:15px;color:#2b2b2b;white-space:nowrap;letter-spacing:0.2px"><span><span style="letter-spacing:-0.1px">u</span></span></div>
<div style="position:absolute;left:495px;top:372px;width:70px;height:47px;display:flex;align-items:center;justify-content:center;text-align:center;padding-top:1px;box-sizing:border-box;font-size:12px;line-height:15px;color:#2b2b2b">Item Unit<br>Price(KES)</div>
<div style="position:absolute;left:566px;top:372px;width:298px;height:47px;display:flex;align-items:center;padding-left:3px;padding-top:1px;box-sizing:border-box;font-size:12px;line-height:15px;color:#2b2b2b;white-space:nowrap;letter-spacing:0.2px"><span>76.61</span></div>
<div style="position:absolute;left:125px;top:419px;width:740px;height:1px;background:#e6e6e6"></div>
<div style="position:absolute;left:126px;top:420px;width:70px;height:32px;display:flex;align-items:center;justify-content:center;text-align:center;padding-top:1px;box-sizing:border-box;font-size:12px;line-height:15px;color:#2b2b2b">Item Total<br>Price(USD)</div>
<div style="position:absolute;left:197px;top:420px;width:297px;height:32px;display:flex;align-items:center;padding-left:3px;padding-top:1px;box-sizing:border-box;font-size:12px;line-height:15px;color:#2b2b2b;white-space:nowrap;letter-spacing:0.2px"><span>6,255.75</span></div>
<div style="position:absolute;left:495px;top:420px;width:70px;height:32px;display:flex;align-items:center;justify-content:center;text-align:center;padding-top:1px;box-sizing:border-box;font-size:12px;line-height:15px;color:#2b2b2b">Type of<br>package</div>
<div style="position:absolute;left:566px;top:420px;width:298px;height:32px;display:flex;align-items:center;padding-left:3px;padding-top:1px;box-sizing:border-box;font-size:12px;line-height:15px;color:#2b2b2b;white-space:nowrap;letter-spacing:0.2px"><span><span style="letter-spacing:-0.1px">BG</span></span></div>
<div style="position:absolute;left:125px;top:452px;width:740px;height:1px;background:#e6e6e6"></div>
<div style="position:absolute;left:126px;top:453px;width:70px;height:32px;display:flex;align-items:center;justify-content:center;text-align:center;padding-top:1px;box-sizing:border-box;font-size:12px;line-height:15px;color:#2b2b2b">Item Unit<br>Price(USD)</div>
<div style="position:absolute;left:197px;top:453px;width:297px;height:32px;display:flex;align-items:center;padding-left:3px;padding-top:1px;box-sizing:border-box;font-size:12px;line-height:15px;color:#2b2b2b;white-space:nowrap;letter-spacing:0.2px"><span>0.72</span></div>
<div style="position:absolute;left:495px;top:453px;width:70px;height:32px;display:flex;align-items:center;justify-content:center;text-align:center;padding-top:1px;box-sizing:border-box;font-size:12px;line-height:15px;color:#2b2b2b"></div>
<div style="position:absolute;left:566px;top:453px;width:298px;height:32px;display:flex;align-items:center;padding-left:3px;padding-top:1px;box-sizing:border-box;font-size:12px;line-height:15px;color:#2b2b2b;white-space:nowrap;letter-spacing:0.2px"><span></span></div>
<div style="position:absolute;left:125px;top:485px;width:740px;height:1px;background:#e6e6e6"></div>
<div style="position:absolute;left:125px;top:338px;width:1px;height:148px;background:#e6e6e6"></div>
<div style="position:absolute;left:196px;top:338px;width:1px;height:148px;background:#e6e6e6"></div>
<div style="position:absolute;left:494px;top:338px;width:1px;height:148px;background:#e6e6e6"></div>
<div style="position:absolute;left:565px;top:338px;width:1px;height:148px;background:#e6e6e6"></div>
<div style="position:absolute;left:864px;top:338px;width:1px;height:148px;background:#e6e6e6"></div>
<div style="position:absolute;left:122px;top:491px;width:746px;height:205px;border:1px solid #99bbe8;box-sizing:border-box;background:#fff"></div>
<div style="position:absolute;left:123px;top:492px;width:744px;height:21px;background:linear-gradient(#f0f6fc 0,#f0f6fc 1px,#dbe7f6 1px,#cfdff3 11px,#abc7ea 11px,#b8cfee 12px,#bed4f0 20px,#c4d8f1 21px)"></div>
<div style="position:absolute;left:123px;top:513px;width:744px;height:1px;background:#99bbe8"></div>
<div style="position:absolute;left:134px;top:496px;white-space:nowrap;font-weight:bold;font-size:12px;color:#15428b;line-height:14px;letter-spacing:-0.2px">Shipping Info</div>
<div style="position:absolute;left:125px;top:516px;width:740px;height:177px;background:#fff"></div>
<div style="position:absolute;left:126px;top:517px;width:70px;height:175px;background:#f9f9f9"></div>
<div style="position:absolute;left:494px;top:517px;width:71px;height:175px;background:#f9f9f9"></div>
<div style="position:absolute;left:125px;top:516px;width:740px;height:1px;background:#e6e6e6"></div>
<div style="position:absolute;left:126px;top:517px;width:70px;height:32px;display:flex;align-items:center;justify-content:center;text-align:center;padding-top:1px;box-sizing:border-box;font-size:12px;line-height:15px;color:#2b2b2b">Date</div>
<div style="position:absolute;left:197px;top:517px;width:296px;height:32px;display:flex;align-items:center;padding-left:3px;padding-top:1px;box-sizing:border-box;font-size:12px;line-height:15px;color:#2b2b2b;white-space:nowrap;letter-spacing:0.2px"><span>2020-04-30</span></div>
<div style="position:absolute;left:494px;top:517px;width:71px;height:32px;display:flex;align-items:center;justify-content:center;text-align:center;padding-top:1px;box-sizing:border-box;font-size:12px;line-height:15px;color:#2b2b2b">Customs<br>Station</div>
<div style="position:absolute;left:566px;top:517px;width:298px;height:32px;display:flex;align-items:center;padding-left:3px;padding-top:1px;box-sizing:border-box;font-size:12px;line-height:15px;color:#2b2b2b;white-space:nowrap;letter-spacing:0.2px"><span><span style="letter-spacing:-0.1px">MSA</span></span></div>
<div style="position:absolute;left:125px;top:549px;width:740px;height:1px;background:#e6e6e6"></div>
<div style="position:absolute;left:126px;top:550px;width:70px;height:32px;display:flex;align-items:center;justify-content:center;text-align:center;padding-top:1px;box-sizing:border-box;font-size:12px;line-height:15px;color:#2b2b2b">Bill of<br>Lading No.</div>
<div style="position:absolute;left:197px;top:550px;width:296px;height:32px;display:flex;align-items:center;padding-left:3px;padding-top:1px;box-sizing:border-box;font-size:12px;line-height:15px;color:#2b2b2b;white-space:nowrap;letter-spacing:0.2px"><span>595919950</span></div>
<div style="position:absolute;left:494px;top:550px;width:71px;height:32px;display:flex;align-items:center;justify-content:center;text-align:center;padding-top:1px;box-sizing:border-box;font-size:12px;line-height:15px;color:#2b2b2b">Identification<br>No.</div>
<div style="position:absolute;left:566px;top:550px;width:298px;height:32px;display:flex;align-items:center;padding-left:3px;padding-top:1px;box-sizing:border-box;font-size:12px;line-height:15px;color:#2b2b2b;white-space:nowrap;letter-spacing:0.2px"><span><span style="letter-spacing:-0.1px">E</span>2003308961</span></div>
<div style="position:absolute;left:125px;top:582px;width:740px;height:1px;background:#e6e6e6"></div>
<div style="position:absolute;left:126px;top:583px;width:70px;height:32px;display:flex;align-items:center;justify-content:center;text-align:center;padding-top:1px;box-sizing:border-box;font-size:12px;line-height:15px;color:#2b2b2b">Declaration<br>No.</div>
<div style="position:absolute;left:197px;top:583px;width:296px;height:32px;display:flex;align-items:center;padding-left:3px;padding-top:1px;box-sizing:border-box;font-size:12px;line-height:15px;color:#2b2b2b;white-space:nowrap;letter-spacing:0.2px"><span>7517227</span></div>
<div style="position:absolute;left:494px;top:583px;width:71px;height:32px;display:flex;align-items:center;justify-content:center;text-align:center;padding-top:1px;box-sizing:border-box;font-size:12px;line-height:15px;color:#2b2b2b">Agent ID</div>
<div style="position:absolute;left:566px;top:583px;width:298px;height:32px;display:flex;align-items:center;padding-left:3px;padding-top:1px;box-sizing:border-box;font-size:12px;line-height:15px;color:#2b2b2b;white-space:nowrap;letter-spacing:0.2px"><span></span></div>
<div style="position:absolute;left:125px;top:615px;width:740px;height:1px;background:#e6e6e6"></div>
<div style="position:absolute;left:126px;top:616px;width:70px;height:21px;display:flex;align-items:center;justify-content:center;text-align:center;padding-top:1px;box-sizing:border-box;font-size:12px;line-height:15px;color:#2b2b2b">Manifest No.</div>
<div style="position:absolute;left:197px;top:616px;width:296px;height:21px;display:flex;align-items:center;padding-left:3px;padding-top:1px;box-sizing:border-box;font-size:12px;line-height:15px;color:#2b2b2b;white-space:nowrap;letter-spacing:0.2px"><span>2020<span style="letter-spacing:-0.1px">MSA</span>163375</span></div>
<div style="position:absolute;left:494px;top:616px;width:71px;height:21px;display:flex;align-items:center;justify-content:center;text-align:center;padding-top:1px;box-sizing:border-box;font-size:12px;line-height:15px;color:#2b2b2b">Agent</div>
<div style="position:absolute;left:566px;top:616px;width:298px;height:21px;display:flex;align-items:center;padding-left:3px;padding-top:1px;box-sizing:border-box;font-size:12px;line-height:15px;color:#2b2b2b;white-space:nowrap;letter-spacing:0.2px"><span><span style="letter-spacing:-0.1px">REGAL FREIGHTERS</span></span></div>
<div style="position:absolute;left:125px;top:637px;width:740px;height:1px;background:#e6e6e6"></div>
<div style="position:absolute;left:126px;top:638px;width:70px;height:21px;display:flex;align-items:center;justify-content:center;text-align:center;padding-top:1px;box-sizing:border-box;font-size:12px;line-height:15px;color:#2b2b2b">Origin</div>
<div style="position:absolute;left:197px;top:638px;width:296px;height:21px;display:flex;align-items:center;padding-left:3px;padding-top:1px;box-sizing:border-box;font-size:12px;line-height:15px;color:#2b2b2b;white-space:nowrap;letter-spacing:0.2px"><span><span style="letter-spacing:-0.1px">China</span></span></div>
<div style="position:absolute;left:494px;top:638px;width:71px;height:21px;display:flex;align-items:center;justify-content:center;text-align:center;padding-top:1px;box-sizing:border-box;font-size:12px;line-height:15px;color:#2b2b2b">Address</div>
<div style="position:absolute;left:566px;top:638px;width:298px;height:21px;display:flex;align-items:center;padding-left:3px;padding-top:1px;box-sizing:border-box;font-size:12px;line-height:15px;color:#2b2b2b;white-space:nowrap;letter-spacing:0.2px"><span>99569 80100 <span style="letter-spacing:-0.1px">MOMBASA</span></span></div>
<div style="position:absolute;left:125px;top:659px;width:740px;height:1px;background:#e6e6e6"></div>
<div style="position:absolute;left:126px;top:660px;width:70px;height:32px;display:flex;align-items:center;justify-content:center;text-align:center;padding-top:1px;box-sizing:border-box;font-size:12px;line-height:15px;color:#2b2b2b">Port of<br>Discharge</div>
<div style="position:absolute;left:197px;top:660px;width:296px;height:32px;display:flex;align-items:center;padding-left:3px;padding-top:1px;box-sizing:border-box;font-size:12px;line-height:15px;color:#2b2b2b;white-space:nowrap;letter-spacing:0.2px"><span><span style="letter-spacing:-0.1px">CNT</span></span></div>
<div style="position:absolute;left:494px;top:660px;width:71px;height:32px;display:flex;align-items:center;justify-content:center;text-align:center;padding-top:1px;box-sizing:border-box;font-size:12px;line-height:15px;color:#2b2b2b"></div>
<div style="position:absolute;left:566px;top:660px;width:298px;height:32px;display:flex;align-items:center;padding-left:3px;padding-top:1px;box-sizing:border-box;font-size:12px;line-height:15px;color:#2b2b2b;white-space:nowrap;letter-spacing:0.2px"><span></span></div>
<div style="position:absolute;left:125px;top:692px;width:740px;height:1px;background:#e6e6e6"></div>
<div style="position:absolute;left:125px;top:516px;width:1px;height:177px;background:#e6e6e6"></div>
<div style="position:absolute;left:196px;top:516px;width:1px;height:177px;background:#e6e6e6"></div>
<div style="position:absolute;left:493px;top:516px;width:1px;height:177px;background:#e6e6e6"></div>
<div style="position:absolute;left:565px;top:516px;width:1px;height:177px;background:#e6e6e6"></div>
<div style="position:absolute;left:864px;top:516px;width:1px;height:177px;background:#e6e6e6"></div>
<div style="position:absolute;left:122px;top:698px;width:746px;height:84px;border:1px solid #99bbe8;box-sizing:border-box;background:#fff"></div>
<div style="position:absolute;left:123px;top:699px;width:744px;height:21px;background:linear-gradient(#f0f6fc 0,#f0f6fc 1px,#dbe7f6 1px,#cfdff3 11px,#abc7ea 11px,#b8cfee 12px,#bed4f0 20px,#c4d8f1 21px)"></div>
<div style="position:absolute;left:123px;top:720px;width:744px;height:1px;background:#99bbe8"></div>
<div style="position:absolute;left:134px;top:703px;white-space:nowrap;font-weight:bold;font-size:12px;color:#15428b;line-height:14px;letter-spacing:-0.2px">Description</div>
<div style="position:absolute;left:125px;top:723px;width:740px;height:56px;background:#fff"></div>
<div style="position:absolute;left:126px;top:724px;width:70px;height:54px;background:#f9f9f9"></div>
<div style="position:absolute;left:125px;top:723px;width:740px;height:1px;background:#e6e6e6"></div>
<div style="position:absolute;left:126px;top:724px;width:70px;height:21px;display:flex;align-items:center;justify-content:center;text-align:center;padding-top:1px;box-sizing:border-box;font-size:12px;line-height:15px;color:#2b2b2b">HS Code</div>
<div style="position:absolute;left:197px;top:724px;width:667px;height:21px;display:flex;align-items:center;padding-left:3px;padding-top:1px;box-sizing:border-box;font-size:12px;line-height:15px;color:#2b2b2b;white-space:nowrap;letter-spacing:0.2px"><span>6209900000</span></div>
<div style="position:absolute;left:125px;top:745px;width:740px;height:1px;background:#e6e6e6"></div>
<div style="position:absolute;left:126px;top:746px;width:70px;height:32px;display:flex;align-items:center;justify-content:center;text-align:center;padding-top:1px;box-sizing:border-box;font-size:12px;line-height:15px;color:#2b2b2b">Product<br>Description</div>
<div style="position:absolute;left:197px;top:746px;width:667px;height:32px;display:flex;align-items:center;padding-left:3px;padding-top:1px;box-sizing:border-box;font-size:12px;line-height:15px;color:#2b2b2b;white-space:nowrap;letter-spacing:0.2px"><span><span style="letter-spacing:-0.1px">KIDS CLOTHES</span></span></div>
<div style="position:absolute;left:125px;top:778px;width:740px;height:1px;background:#e6e6e6"></div>
<div style="position:absolute;left:125px;top:723px;width:1px;height:56px;background:#e6e6e6"></div>
<div style="position:absolute;left:196px;top:723px;width:1px;height:56px;background:#e6e6e6"></div>
<div style="position:absolute;left:864px;top:723px;width:1px;height:56px;background:#e6e6e6"></div>
</body></html>
